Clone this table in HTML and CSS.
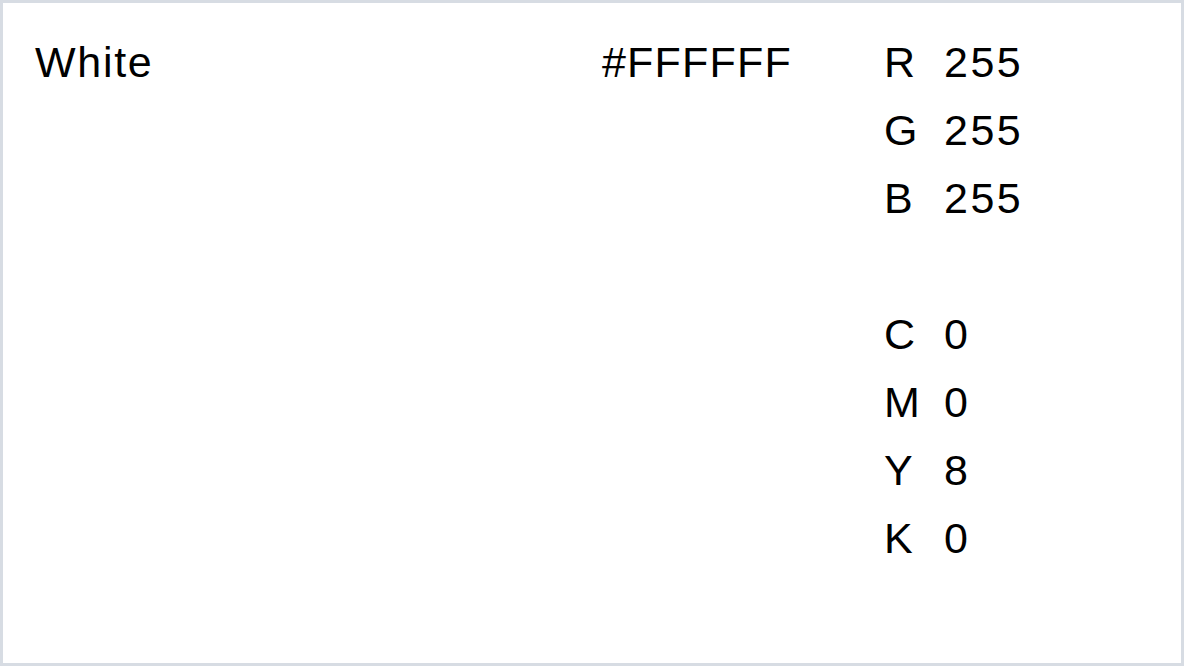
FILE: index.html
```html
<!DOCTYPE html>
<html>
<head>
<meta charset="utf-8">
<link rel="stylesheet" href="styles.css">
</head>
<body>
<div class="card">
  <div class="name">White</div>
  <div class="hex">#FFFFFF</div>
  <div class="values">
    <div class="group">
      <div class="row"><span class="key">R</span><span class="val">255</span></div>
      <div class="row"><span class="key">G</span><span class="val">255</span></div>
      <div class="row"><span class="key">B</span><span class="val">255</span></div>
    </div>
    <div class="group">
      <div class="row"><span class="key">C</span><span class="val">0</span></div>
      <div class="row"><span class="key">M</span><span class="val">0</span></div>
      <div class="row"><span class="key">Y</span><span class="val">8</span></div>
      <div class="row"><span class="key">K</span><span class="val">0</span></div>
    </div>
  </div>
</div>
</body>
</html>
```

FILE: styles.css
```css
html, body {
  margin: 0;
  padding: 0;
  background: #ffffff;
}
.card {
  box-sizing: border-box;
  width: 1184px;
  height: 666px;
  border: 3px solid #d7dce3;
  background: #ffffff;
  padding: 25px 32px;
  display: grid;
  grid-template-columns: 567px 282px auto;
  align-items: start;
  font-family: "Liberation Sans", Arial, sans-serif;
  font-size: 43px;
  letter-spacing: 1.2px;
  line-height: 68px;
  color: #000000;
}
.name {
  letter-spacing: 1.7px;
}
.values {
  display: flex;
  flex-direction: column;
  gap: 68px;
}
.row {
  display: flex;
}
.key {
  width: 60px;
}
.val {
  letter-spacing: 2.5px;
}
```
